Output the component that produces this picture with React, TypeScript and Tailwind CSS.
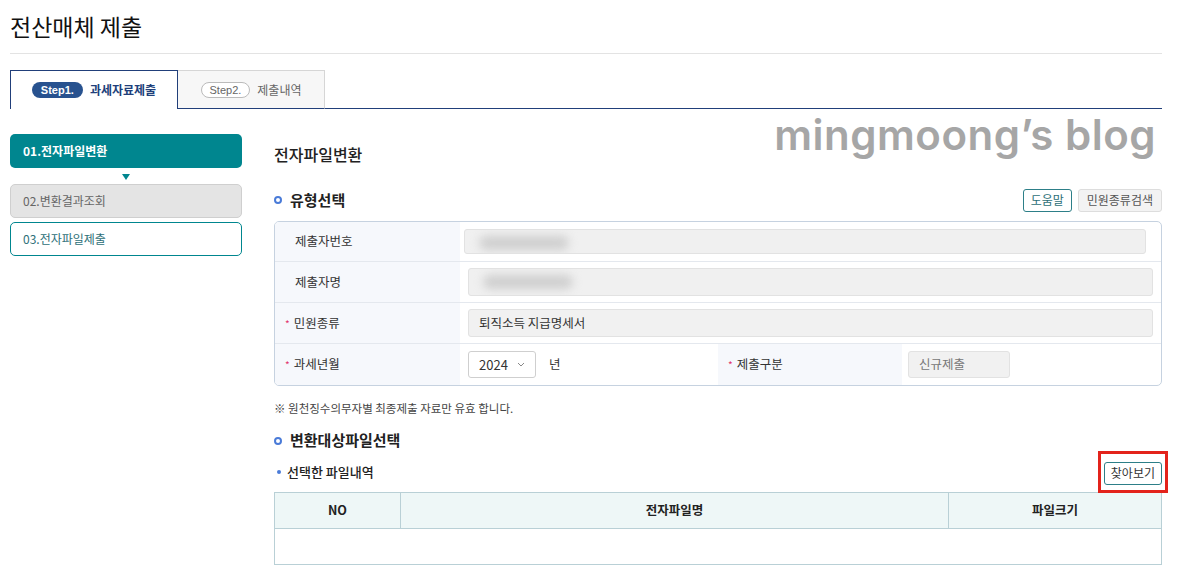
import React from 'react';

const font = { fontFamily: '"Noto Sans CJK KR", "Noto Sans", sans-serif' };

function Req() {
  return <span className="mr-1 text-[10px] text-[#e2336b]">*</span>;
}

function Blurred() {
  return (
    <div className="relative h-full w-full overflow-hidden rounded-[3px] border border-[#e2e2e2] bg-[#f0f0f0]">
      <div className="absolute left-[14px] top-[6px] h-[14px] w-[90px] rounded-full bg-[#cfcfcf] blur-[5px]" />
    </div>
  );
}

function SectionTitle({ children }: { children: React.ReactNode }) {
  return (
    <div className="flex items-center gap-2">
      <span className="h-[8px] w-[8px] rounded-full border-2 border-[#4a7bd8]" />
      <span className="text-[15px] font-bold text-[#222]">{children}</span>
    </div>
  );
}

export default function App() {
  return (
    <div className="h-[584px] w-[1177px] overflow-hidden bg-white text-[#333]" style={font}>
      <div className="px-[10px] pr-[15px]">
        {/* Title */}
        <h1 className="pt-[8px] text-[23px] font-normal leading-[36px] text-[#111]">전산매체 제출</h1>
        <div className="mt-[9px] h-px bg-[#e3e3e3]" />

        {/* Tabs */}
        <div className="mt-[16px] flex h-[39px] items-end">
          <div className="flex h-[39px] w-[168px] items-center justify-center gap-[7px] border border-b-0 border-[#213f7a] bg-white">
            <span className="rounded-full bg-[#28528f] px-[9px] py-[1px] text-[11px] font-bold leading-[14px] text-white" style={{ fontFamily: 'Arial, "Liberation Sans", sans-serif' }}>Step1.</span>
            <span className="text-[12px] font-bold text-[#213f7a]">과세자료제출</span>
          </div>
          <div className="flex h-[39px] flex-1 items-end">
            <div className="flex h-[39px] w-[147px] items-center justify-center gap-[7px] border-t border-r border-[#d6d6d6] bg-[#f7f7f7] border-b border-b-[#213f7a]">
              <span className="rounded-full border border-[#bbb] bg-white px-[8px] text-[11px] leading-[14px] text-[#666]" style={{ fontFamily: 'Arial, "Liberation Sans", sans-serif' }}>Step2.</span>
              <span className="text-[12px] text-[#666]">제출내역</span>
            </div>
            <div className="h-px flex-1 bg-[#213f7a]" />
          </div>
        </div>

        <div className="mt-[25px] flex gap-[32px]">
          {/* Sidebar */}
          <div className="w-[232px] shrink-0">
            <div className="flex h-[34px] items-center rounded-[5px] bg-[#00868f] px-[13px] text-[12px] font-bold text-white">01.전자파일변환</div>
            <div className="flex h-[16px] items-center justify-center">
              <span className="mt-[2px] h-0 w-0 border-x-[4px] border-t-[6px] border-x-transparent border-t-[#00868f]" />
            </div>
            <div className="flex h-[34px] items-center rounded-[5px] border border-[#cfcfcf] bg-[#e4e4e4] px-[12px] text-[12px] text-[#666]">02.변환결과조회</div>
            <div className="mt-[4px] flex h-[34px] items-center rounded-[5px] border border-[#00868f] bg-white px-[12px] text-[12px] text-[#2d6f78]">03.전자파일제출</div>
          </div>

          {/* Main */}
          <div className="flex-1">
            <div className="relative flex h-[35px] items-end">
              <h2 className="pb-[3px] text-[16px] font-medium text-[#222]">전자파일변환</h2>
              <div className="absolute right-[6px] top-[-31px] text-[42px] font-semibold tracking-[0.5px] text-[#a6a6a6]" style={{ fontFamily: 'Inter, "Open Sans", sans-serif' }}>mingmoong’s blog</div>
            </div>

            <div className="mt-[19px] flex h-[24px] items-center justify-between">
              <SectionTitle>유형선택</SectionTitle>
              <div className="flex gap-[6px]">
                <button className="h-[23px] rounded-[3px] border border-[#2d7f88] bg-white px-[7px] text-[12px] text-[#2d6f78]">도움말</button>
                <button className="h-[23px] rounded-[3px] border border-[#ddd] bg-[#f3f3f3] px-[8px] text-[12px] text-[#555]">민원종류검색</button>
              </div>
            </div>

            {/* Form */}
            <div className="mt-[9px] overflow-hidden rounded-[5px] border border-[#c6d2e0] text-[12.5px]">
              <div className="flex h-[40px] border-b border-[#e4e8ee]">
                <div className="flex w-[185px] items-center bg-[#f6f8fc] pl-[20px]">제출자번호</div>
                <div className="flex flex-1 items-center py-[7px] pl-[4px] pr-[15px]"><Blurred /></div>
              </div>
              <div className="flex h-[41px] border-b border-[#e4e8ee]">
                <div className="flex w-[185px] items-center bg-[#f6f8fc] pl-[20px]">제출자명</div>
                <div className="flex flex-1 items-center py-[6px] pl-[8px] pr-[8px]"><Blurred /></div>
              </div>
              <div className="flex h-[41px] border-b border-[#e4e8ee]">
                <div className="flex w-[185px] items-center bg-[#f6f8fc] pl-[10px]"><Req />민원종류</div>
                <div className="flex flex-1 items-center py-[6px] pl-[8px] pr-[8px]">
                  <div className="flex h-full w-full items-center rounded-[3px] border border-[#e2e2e2] bg-[#f1f1f1] px-[10px] text-[#333]">퇴직소득 지급명세서</div>
                </div>
              </div>
              <div className="flex h-[41px]">
                <div className="flex w-[185px] items-center bg-[#f6f8fc] pl-[10px]"><Req />과세년월</div>
                <div className="flex w-[258px] items-center gap-[13px] pl-[8px]">
                  <div className="flex h-[27px] w-[68px] items-center justify-between rounded-[3px] border border-[#cfcfcf] bg-white px-[10px] text-[13px]">
                    <span>2024</span>
                    <svg width="8" height="5" viewBox="0 0 8 5"><path d="M1 1l3 3 3-3" fill="none" stroke="#888" strokeWidth="1" /></svg>
                  </div>
                  <span>년</span>
                </div>
                <div className="flex w-[184px] items-center bg-[#f6f8fc] pl-[10px]"><Req />제출구분</div>
                <div className="flex flex-1 items-center pl-[6px]">
                  <div className="flex h-[27px] w-[102px] items-center rounded-[3px] border border-[#e2e2e2] bg-[#f1f1f1] px-[10px] text-[#777]">신규제출</div>
                </div>
              </div>
            </div>

            <p className="mt-[14px] text-[11.5px] text-[#444]">※ 원천징수의무자별 최종제출 자료만 유효 합니다.</p>

            <div className="mt-[12px]">
              <SectionTitle>변환대상파일선택</SectionTitle>
            </div>

            <div className="mt-[5px] flex h-[30px] items-center justify-between">
              <div className="flex items-center gap-[6px] pl-[3px] text-[13px] font-medium text-[#222]">
                <span className="h-[4px] w-[4px] rounded-full bg-[#4a7bd8]" />
                선택한 파일내역
              </div>
              <div className="relative">
                <div className="absolute -inset-x-[6px] -inset-y-[8px] border-[3px] border-[#e3231b]" />
                <button className="relative h-[23px] rounded-[3px] border border-[#2d7f88] bg-white px-[6px] text-[12px] text-[#333]">찾아보기</button>
              </div>
            </div>

            {/* Table */}
            <table className="mt-[5px] w-full border-collapse border border-[#b9d0d6] text-[12.5px]">
              <thead>
                <tr className="h-[36px] bg-[#eef7f7] font-bold text-[#222]">
                  <th className="w-[126px] border border-[#b9d0d6] font-semibold">NO</th>
                  <th className="border border-[#b9d0d6] font-semibold">전자파일명</th>
                  <th className="w-[213px] border border-[#b9d0d6] font-semibold">파일크기</th>
                </tr>
              </thead>
              <tbody>
                <tr className="h-[36px]"><td colSpan={3} /></tr>
              </tbody>
            </table>
          </div>
        </div>
      </div>
    </div>
  );
}
